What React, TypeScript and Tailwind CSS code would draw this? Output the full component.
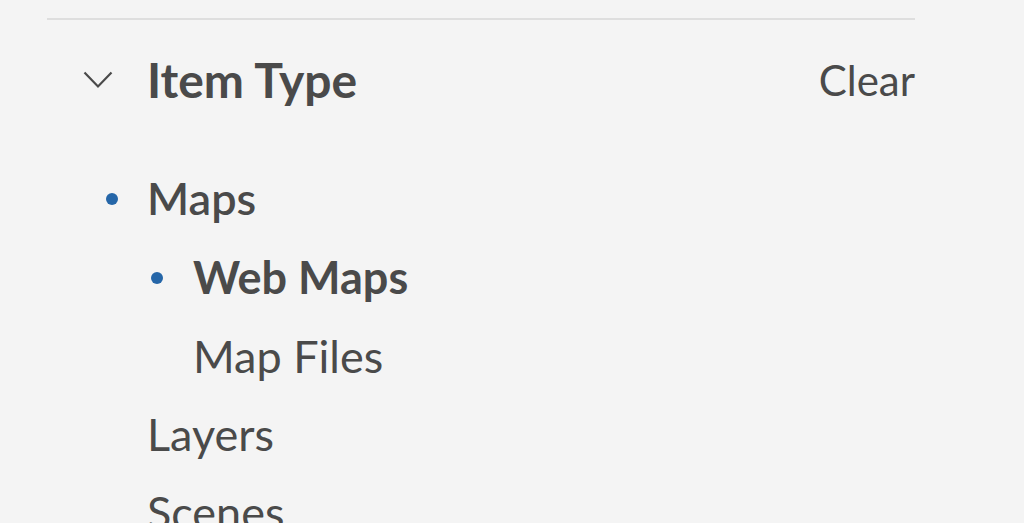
import React from "react";

const font = { fontFamily: "Lato, 'Noto Sans', sans-serif" };

function Bullet() {
  return <span className="block w-[12px] h-[12px] shrink-0 rounded-full bg-[#2566a8]" />;
}

export default function App() {
  return (
    <div className="w-[1024px] h-[530px] bg-white overflow-hidden" style={font}>
      <div className="h-[523px] bg-[#f4f4f4] overflow-hidden">
        <div className="ml-[47px] w-[868px] pt-[18px]">
          <div className="border-t-2 border-[#dedede]" />
          <div className="flex items-center h-[120px]">
            <div className="w-[100px] pl-[36px] flex items-center">
              <svg width="30" height="18" viewBox="0 0 30 18" fill="none">
                <path d="M1.5 1.5 L15 15.5 L28.5 1.5" stroke="#4a4a4a" strokeWidth="2.2" />
              </svg>
            </div>
            <div className="text-[48px] font-bold text-[#4a4a4a] leading-none">Item Type</div>
            <div className="ml-auto text-[42px] text-[#4a4a4a] leading-none">Clear</div>
          </div>
          <div className="mt-[19px] text-[#4a4a4a] text-[45px] leading-none">
            <div className="flex items-center h-[79px]">
              <div className="w-[100px] pl-[59px] flex items-center"><Bullet /></div>
              <span className="font-semibold">Maps</span>
            </div>
            <div className="flex items-center h-[79px]">
              <div className="w-[146px] pl-[104px] flex items-center"><Bullet /></div>
              <span className="font-bold">Web Maps</span>
            </div>
            <div className="flex items-center h-[78px]">
              <div className="w-[146px]" />
              <span>Map Files</span>
            </div>
            <div className="flex items-center h-[78px]">
              <div className="w-[100px]" />
              <span>Layers</span>
            </div>
            <div className="flex items-center h-[78px]">
              <div className="w-[100px]" />
              <span>Scenes</span>
            </div>
          </div>
        </div>
      </div>
    </div>
  );
}
